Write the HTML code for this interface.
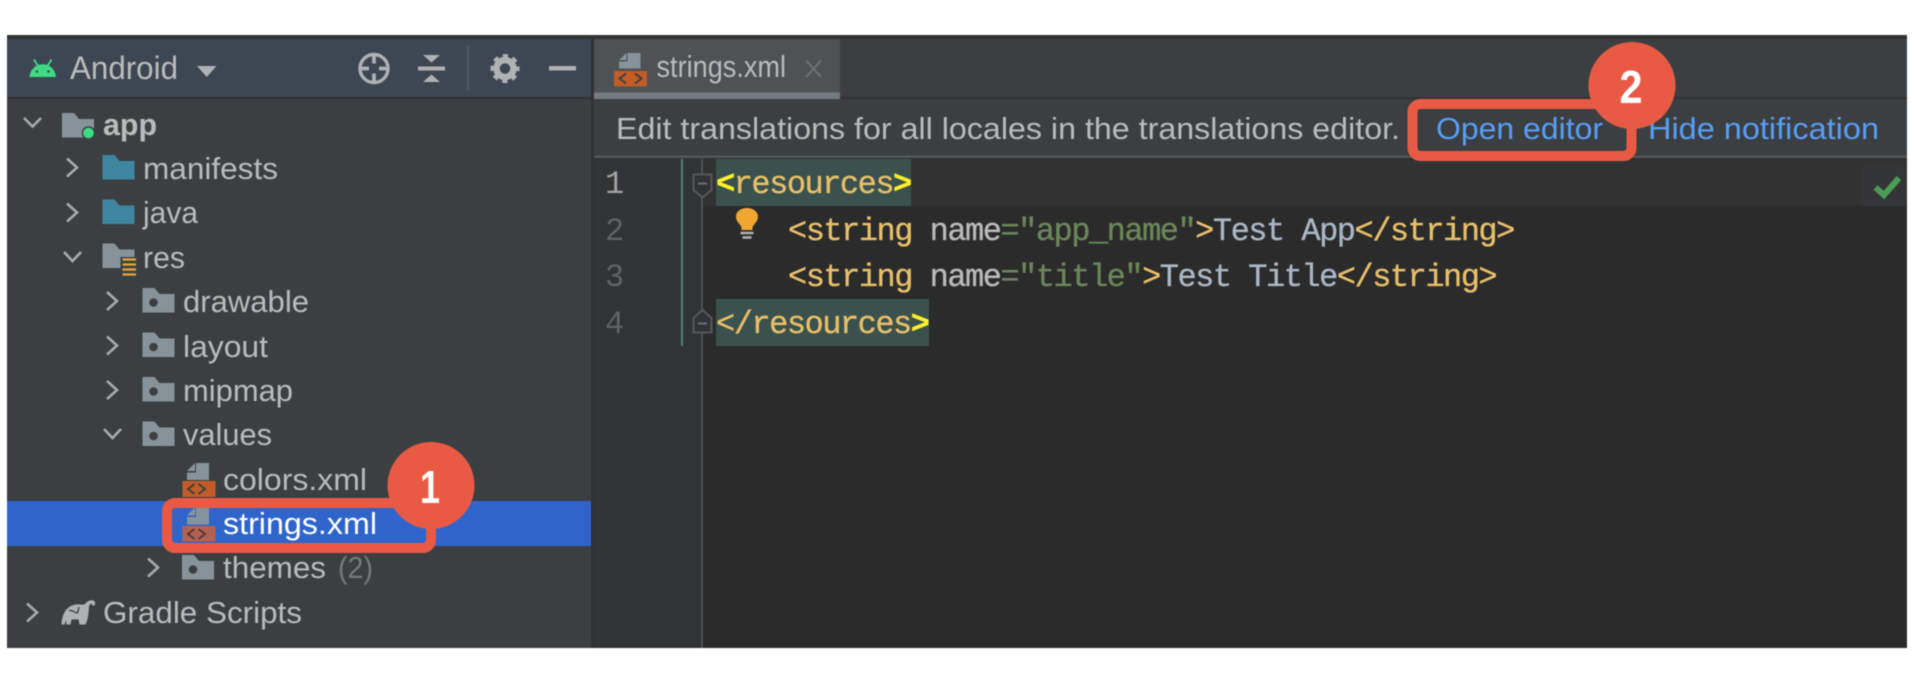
<!DOCTYPE html>
<html>
<head>
<meta charset="utf-8">
<style>
html,body{margin:0;padding:0;background:#fff;width:1916px;height:682px;overflow:hidden}
svg{display:block;filter:blur(.45px)}
text{font-family:"Liberation Sans",sans-serif;font-size:31px;fill:#bbbbbb;white-space:pre}
.m{font-family:"Liberation Mono",monospace;font-size:32px;letter-spacing:-1.5px;stroke-width:.35px}
.t{fill:#e8bf6a;stroke:#e8bf6a}.b{fill:#fff02a;stroke:#fff02a;font-weight:bold}.n{fill:#bababa;stroke:#bababa}.s{fill:#6a8759;stroke:#6a8759}.v{fill:#a9b7c6;stroke:#a9b7c6}
.l{fill:#5f6366}
.a{fill:#589df6}
.chev{fill:none;stroke:#a8aaac;stroke-width:2.6}
</style>
</head>
<body>
<svg width="1916" height="682" viewBox="0 0 1916 682" xmlns="http://www.w3.org/2000/svg">
<defs>
<path id="f" d="M0 0H12L17 6H32V24.500H0Z"/>
<g id="rf"><path d="M0 0H12L17 6H32V24.500H0Z" fill="#87939a"/><circle cx="11" cy="14.500" r="4.300" fill="#3c3f41"/></g>
</defs>

<!-- frame -->
<rect x="7" y="35" width="1900" height="613" fill="#3c3f41"/>
<rect x="7" y="35" width="1900" height="4" fill="#323232"/>
<rect x="7" y="39" width="584" height="58" fill="#3d4754"/>
<rect x="7" y="97" width="584" height="2" fill="#323232"/>
<rect x="591" y="39" width="3" height="609" fill="#2f3133"/>
<rect x="840" y="97" width="1067" height="2" fill="#323232"/>

<!-- tab -->
<rect x="594" y="39" width="246" height="54" fill="#4e5254"/>
<rect x="594" y="92.500" width="246" height="6.500" fill="#747a80"/>

<!-- notification -->
<rect x="594" y="155.500" width="1313" height="2.500" fill="#545658"/>

<!-- editor -->
<rect x="594" y="158" width="1313" height="490" fill="#2b2b2b"/>
<rect x="594" y="158" width="108" height="490" fill="#313335"/>
<rect x="702" y="159" width="1205" height="47" fill="#323232"/>
<rect x="716" y="159" width="195" height="47" fill="#3b514d"/>
<rect x="716" y="299" width="213" height="47" fill="#3b514d"/>
<rect x="1862" y="164" width="45" height="42" rx="4" fill="#333537"/>

<rect x="681" y="159" width="2" height="187" fill="#4f7f78"/>
<rect x="701" y="159" width="2" height="489" fill="#4e5052"/>
<path d="M693.500 174.500H711.500V190L702.500 197.500L693.500 190Z" fill="#313335" stroke="#55585a" stroke-width="2"/>
<path d="M698 183.500H707" stroke="#6a6d70" stroke-width="2"/>
<path d="M693.500 332.500H711.500V318L702.500 310L693.500 318Z" fill="#313335" stroke="#55585a" stroke-width="2"/>
<path d="M698 323.500H707" stroke="#6a6d70" stroke-width="2"/>

<!-- selected row -->
<rect x="7" y="501" width="584" height="45" fill="#2f65ca"/>

<!-- header icons -->
<g fill="#3ddc84">
<path d="M29.500 77A13.300 14 0 0 1 56 77Z"/>
<path d="M34 59.500L38 66M51.500 59.500L47.500 66" stroke="#3ddc84" stroke-width="1.800" fill="none"/>
</g>
<circle cx="37" cy="71.500" r="1.300" fill="#3d4754"/><circle cx="48.500" cy="71.500" r="1.300" fill="#3d4754"/>
<text x="70" y="79" textLength="108" lengthAdjust="spacingAndGlyphs" style="font-size:32px">Android</text>
<path d="M197 66H216.500L206.750 77Z" fill="#afb1b3"/>
<g fill="none" stroke="#afb1b3">
<circle cx="374" cy="68.500" r="14" stroke-width="3.400"/>
<path d="M374 55V63.500M374 73.500V82M360.500 68.500H369M379 68.500H387.500" stroke-width="3.800"/>
</g>
<path d="M418 66.500H445V70.500H418Z M423 55H440L431.500 62.500Z M423 82H440L431.500 74.500Z" fill="#afb1b3"/>
<rect x="467" y="46" width="2" height="44" fill="#53595f"/>
<g fill="none" stroke="#afb1b3">
<circle cx="505" cy="68.500" r="8.500" stroke-width="6.500"/>
<circle cx="505" cy="68.500" r="12.300" stroke-width="4.500" stroke-dasharray="5 4.660" stroke-dashoffset="2.500"/>
</g>
<rect x="549" y="66" width="27" height="4.500" fill="#afb1b3"/>

<!-- chevrons -->
<g class="chev">
<path d="M24 118L32.500 126.500L41 118"/>
<path d="M67 158.500L77 167.500L67 176.500"/>
<path d="M67 203.500L77 212.500L67 221.500"/>
<path d="M64 252L72.500 261L81 252"/>
<path d="M107 292L117 301L107 310"/>
<path d="M107 336.500L117 345.500L107 354.500"/>
<path d="M107 381L117 390L107 399"/>
<path d="M104 429L112.500 438L121 429"/>
<path d="M148 558.500L158 567.500L148 576.500"/>
<path d="M27 603.500L37 612.500L27 621.500"/>
</g>

<!-- folders -->
<use href="#f" x="62" y="113" fill="#87939a"/>
<circle cx="88.500" cy="133" r="6.800" fill="#3c3f41"/>
<circle cx="88.500" cy="133" r="5.300" fill="#3ddc84"/>
<use href="#f" x="102.500" y="155" fill="#3e86a0"/>
<use href="#f" x="102.500" y="199.500" fill="#3e86a0"/>
<use href="#f" x="102.500" y="243.500" fill="#87939a"/>
<rect x="120.500" y="257" width="16" height="19" fill="#3c3f41"/>
<path d="M122.500 259.500H136M122.500 264.500H136M122.500 269.500H136M122.500 274.500H136" stroke="#e5a93a" stroke-width="2.200"/>
<use href="#rf" x="142.500" y="288"/>
<use href="#rf" x="142.500" y="332.500"/>
<use href="#rf" x="142.500" y="377"/>
<use href="#rf" x="142.500" y="421.500"/>
<use href="#rf" x="182" y="555"/>

<!-- file icons -->
<path d="M196 463H209V480H187V472.500H196Z M187 471L195 463V471Z" fill="#87939a"/>
<rect x="182.500" y="481" width="33" height="16" fill="#c25d28"/>
<path d="M194.500 484L188 489L194.500 494M198.500 484L205 489L198.500 494" fill="none" stroke="#3c3f41" stroke-width="2"/>

<path d="M196 507.500H209V524.500H187V517H196Z M187 515.500L195 507.500V515.500Z" fill="#87939a"/>
<rect x="182.500" y="526" width="33" height="15.500" fill="#b8604f"/>
<path d="M194.500 529L188 534L194.500 539M198.500 529L205 534L198.500 539" fill="none" stroke="#55393a" stroke-width="2"/>

<path d="M627.500 53H640.500V68.500H619V61.500H627.500Z M619 60L626.500 53V60Z" fill="#87939a"/>
<rect x="614" y="71" width="33" height="15.500" fill="#c25d28"/>
<path d="M626 73.500L619.500 78.500L626 83.500M635 73.500L641.500 78.500L635 83.500" fill="none" stroke="#3c3f41" stroke-width="2"/>

<!-- elephant -->
<path d="M61.500 624.500C62 614 66.500 605.500 76 604.500C80 604 83 605.500 85 604C87.500 600.500 92.500 599 94.500 601.500C96 604 94.500 606.500 92.500 605.500C92.500 603.500 89.500 603 89 606.500C88.500 612 88.500 619 85.500 624.500H79.500L78.500 619.500H71.500L70.500 624.500H66.500L66 620L64.500 624.500Z" fill="#afb1b3"/>
<path d="M69 610.500C72 610 74 612 77 613C78.500 611 79 609 78.500 607" fill="none" stroke="#3c3f41" stroke-width="1.300"/>

<!-- tree labels -->
<text x="103" y="135" textLength="54" lengthAdjust="spacingAndGlyphs" style="font-weight:bold;font-size:31px">app</text>
<text x="143" y="179" textLength="135" lengthAdjust="spacingAndGlyphs">manifests</text>
<text x="143" y="223" textLength="55" lengthAdjust="spacingAndGlyphs">java</text>
<text x="143" y="268" textLength="42" lengthAdjust="spacingAndGlyphs">res</text>
<text x="183" y="312" textLength="126" lengthAdjust="spacingAndGlyphs">drawable</text>
<text x="183" y="357" textLength="85" lengthAdjust="spacingAndGlyphs">layout</text>
<text x="183" y="401" textLength="110" lengthAdjust="spacingAndGlyphs">mipmap</text>
<text x="183" y="445" textLength="89" lengthAdjust="spacingAndGlyphs">values</text>
<text x="223" y="490" textLength="144" lengthAdjust="spacingAndGlyphs">colors.xml</text>
<text x="223" y="534" textLength="154" lengthAdjust="spacingAndGlyphs" style="fill:#fff">strings.xml</text>
<text x="223" y="578" textLength="103" lengthAdjust="spacingAndGlyphs">themes</text>
<text x="338" y="578" textLength="35" lengthAdjust="spacingAndGlyphs" style="fill:#787878">(2)</text>
<text x="103" y="623" textLength="199" lengthAdjust="spacingAndGlyphs">Gradle Scripts</text>

<!-- tab label -->
<text x="656.500" y="77" textLength="129.500" lengthAdjust="spacingAndGlyphs">strings.xml</text>
<path d="M806 60.500L821 77M821 60.500L806 77" stroke="#6e7072" stroke-width="2" fill="none"/>

<!-- notification -->
<text x="616" y="139" textLength="784" lengthAdjust="spacingAndGlyphs">Edit translations for all locales in the translations editor.</text>
<text class="a" x="1436" y="139" textLength="167" lengthAdjust="spacingAndGlyphs">Open editor</text>
<text class="a" x="1648" y="139" textLength="231" lengthAdjust="spacingAndGlyphs">Hide notification</text>

<!-- line numbers -->
<text class="m" x="605" y="193" style="fill:#a4a3a3">1</text>
<text class="m l" x="605" y="240">2</text>
<text class="m l" x="605" y="286">3</text>
<text class="m l" x="605" y="333">4</text>

<!-- code -->
<text class="m" x="716" y="193"><tspan class="b">&lt;</tspan><tspan class="t">resources</tspan><tspan class="b">&gt;</tspan></text>
<text class="m" x="788" y="240"><tspan class="t">&lt;string </tspan><tspan class="n">name</tspan><tspan class="s">="app_name"</tspan><tspan class="t">&gt;</tspan><tspan class="v">Test App</tspan><tspan class="t">&lt;/string&gt;</tspan></text>
<text class="m" x="788" y="286"><tspan class="t">&lt;string </tspan><tspan class="n">name</tspan><tspan class="s">="title"</tspan><tspan class="t">&gt;</tspan><tspan class="v">Test Title</tspan><tspan class="t">&lt;/string&gt;</tspan></text>
<text class="m" x="716" y="333"><tspan class="t">&lt;/resources</tspan><tspan class="b">&gt;</tspan></text>

<!-- bulb -->
<path d="M741.500 230V227C739 223 736 221 736 216.500C736 211.500 741 208 747 208C753 208 758 211.500 758 216.500C758 221 755 223 752.500 227V230Z" fill="#f0a732"/>
<path d="M740.500 233H753.500M742.500 237.500H751.500" stroke="#afb1b3" stroke-width="2.400"/>

<!-- check -->
<path d="M1875.500 187.500L1884 195L1899 178" fill="none" stroke="#499c54" stroke-width="6"/>

<!-- annotation 1 -->
<rect x="167" y="503" width="264" height="45" rx="8" fill="none" stroke="#e95a44" stroke-width="10"/>
<circle cx="431" cy="485.500" r="43.500" fill="#e95a44"/>
<text x="430" y="503" text-anchor="middle" textLength="20" lengthAdjust="spacingAndGlyphs" style="fill:#fff;font-weight:bold;font-size:46px">1</text>

<!-- annotation 2 -->
<rect x="1412.500" y="104" width="219" height="52" rx="8" fill="none" stroke="#e95a44" stroke-width="10"/>
<circle cx="1632" cy="85.500" r="43.500" fill="#e95a44"/>
<text x="1631" y="103" text-anchor="middle" textLength="23" lengthAdjust="spacingAndGlyphs" style="fill:#fff;font-weight:bold;font-size:46px">2</text>
</svg>
</body>
</html>
